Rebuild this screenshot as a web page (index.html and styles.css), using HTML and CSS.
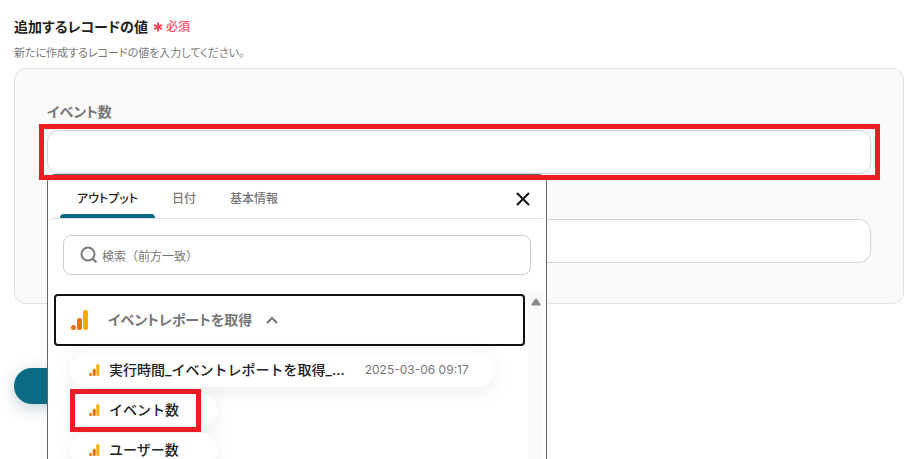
FILE: index.html
```html
<!DOCTYPE html>
<html lang="ja">
<head>
<meta charset="UTF-8" />
<meta name="viewport" content="width=device-width, initial-scale=1" />
<title>レコードの値を設定</title>
<link rel="stylesheet" href="styles.css">
</head>
<body>

<!-- アナリティクスのアイコン -->
<svg class="defs" width="0" height="0" aria-hidden="true">
  <symbol id="analytics" viewBox="0 0 18 20">
    <rect x="12" y="0" width="5" height="20" rx="2.5" fill="#f9ab00" />
    <rect x="6" y="8" width="5" height="12" rx="2.5" fill="#e37400" />
    <circle cx="2.5" cy="17.5" r="2.5" fill="#e37400" />
  </symbol>
</svg>

<main class="page">
  <h1 class="title">追加するレコードの値
    <span class="required">
      <svg width="10" height="10" viewBox="0 0 10 10" aria-hidden="true"><path d="M5 0.5v9M1 2.8l8 4.4M9 2.8l-8 4.4" /></svg>必須
    </span>
  </h1>
  <p class="description">新たに作成するレコードの値を入力してください。</p>

  <form class="panel" id="recordForm">
    <div class="field">
      <label for="eventCount">イベント数</label>
      <div class="field-box marked">
        <input type="text" id="eventCount" name="eventCount" />

        <!-- アウトプット選択 -->
        <div class="picker">
          <div class="picker-head">
            <div class="tabs" role="tablist">
              <button type="button" class="tab active" role="tab" aria-selected="true">アウトプット</button>
              <button type="button" class="tab" role="tab" aria-selected="false">日付</button>
              <button type="button" class="tab" role="tab" aria-selected="false">基本情報</button>
            </div>
            <button type="button" class="close" aria-label="閉じる">
              <svg width="14" height="14" viewBox="0 0 14 14"><path d="M1 1l12 12M13 1L1 13" /></svg>
            </button>
          </div>
          <div class="search">
            <svg width="18" height="18" viewBox="0 0 18 18" aria-hidden="true"><circle cx="8" cy="8" r="6.5" /><path d="M12.7 12.7l3.8 3.8" /></svg>
            <input type="text" aria-label="検索" placeholder="検索（前方一致）" />
          </div>
          <div class="picker-body">
            <div class="list">
              <button type="button" class="group" aria-expanded="true">
                <svg class="group-icon"><use href="#analytics" /></svg>
                イベントレポートを取得
                <svg class="chevron" width="12" height="8" viewBox="0 0 12 8"><path d="M1 7l5-5 5 5" /></svg>
              </button>
              <div class="items">
                <button type="button" class="item">
                  <svg class="item-icon"><use href="#analytics" /></svg>
                  <span class="item-name">実行時間_イベントレポートを取得_...</span>
                  <span class="item-value">2025-03-06 09:17</span>
                </button>
                <button type="button" class="item short picked">
                  <svg class="item-icon"><use href="#analytics" /></svg>
                  <span class="item-name">イベント数</span>
                </button>
                <button type="button" class="item short">
                  <svg class="item-icon"><use href="#analytics" /></svg>
                  <span class="item-name">ユーザー数</span>
                </button>
              </div>
            </div>
            <div class="scrollbar">
              <svg width="10" height="8" viewBox="0 0 10 8" aria-hidden="true"><path d="M5 1.5L8.7 6.5H1.3Z" /></svg>
            </div>
          </div>
        </div>
      </div>
    </div>
    <div class="field">
      <div class="field-box">
        <input type="text" name="userCount" aria-label="ユーザー数" />
      </div>
    </div>
  </form>

  <button type="submit" form="recordForm" class="save" aria-label="保存する"></button>
</main>

</body>
</html>
```
FILE: styles.css
```css
* {
  box-sizing: border-box;
}
body {
  margin: 0;
  font-family: Inter, "Noto Sans CJK JP", sans-serif;
  font-size: 14px;
  line-height: 20px;
  font-feature-settings: "palt";
  background: #fff;
  color: #222;
}
button,
input {
  font: inherit;
  font-feature-settings: inherit;
  color: inherit;
}
button {
  border: none;
  background: none;
  padding: 0;
  cursor: pointer;
}
svg {
  flex: none;
  fill: none;
}
.defs {
  position: absolute;
}
.page {
  position: relative;
  min-height: 100vh;
  overflow: hidden;
  padding: 16px 20px 20px 14px;
}
.title {
  display: flex;
  align-items: center;
  gap: 5px;
  margin: 0;
  font-size: 14px;
  font-weight: 700;
}
.required {
  display: flex;
  align-items: center;
  gap: 3px;
  padding-top: 1px;
  font-size: 12px;
  font-weight: 500;
  color: #ff4b5f;
}
.required svg {
  stroke: #ff4b5f;
  stroke-width: 2;
}
.description {
  margin: 6px 0 5px;
  font-size: 11px;
  color: #777;
}
/* PANEL */
.panel {
  display: flex;
  flex-direction: column;
  gap: 45px;
  padding: 32px 32px 40px;
  border: 1px solid #dfe1e6;
  border-radius: 12px;
  background: #fafafa;
}
.field label {
  display: block;
  margin-bottom: 8px;
  line-height: 21px;
  font-weight: 700;
  color: #777;
}
.field-box {
  position: relative;
}
.field-box > input {
  display: block;
  width: 100%;
  height: 44px;
  padding: 0 16px;
  border: 1px solid #cfd4db;
  border-radius: 12px;
  background: #fff;
}
.field-box > input:focus {
  outline: none;
  border-color: #0b6b83;
}
.marked::after {
  content: "";
  position: absolute;
  inset: -6px -9px -6px -8px;
  border: 5px solid #ee1c25;
  pointer-events: none;
  z-index: 3;
}
/* PICKER */
.picker {
  position: absolute;
  top: 100%;
  left: 0;
  z-index: 2;
  width: 500px;
  padding: 0 3px;
  border: 1px solid #666;
  border-radius: 8px;
  background: #fff;
}
.picker-head {
  display: flex;
  justify-content: space-between;
  padding: 0 9px;
  border-bottom: 1px solid #e0e0e0;
}
.tabs {
  display: flex;
}
.tab {
  position: relative;
  height: 43px;
  padding: 4px 17px 0;
  font-size: 12px;
  font-weight: 500;
  color: #777;
}
.tab.active {
  color: #222;
}
.tab.active::after {
  content: "";
  position: absolute;
  left: 0;
  right: 0;
  bottom: 0;
  height: 4px;
  border-radius: 4px 4px 0 0;
  background: #0b6b83;
}
.close {
  display: flex;
  align-items: center;
  padding: 6px 4px 2px;
}
.close svg {
  stroke: #111;
  stroke-width: 2;
}
.search {
  display: flex;
  align-items: center;
  gap: 4px;
  height: 40px;
  margin: 16px 12px;
  padding: 0 16px;
  border: 1px solid #ccc;
  border-radius: 8px;
}
.search svg {
  stroke: #777;
  stroke-width: 2;
}
.search input {
  flex: 1;
  padding: 4px 0 0;
  border: none;
  outline: none;
  background: none;
  font-size: 12px;
  font-feature-settings: normal;
}
.search input::placeholder {
  color: #777;
}
.picker-body {
  display: flex;
  gap: 3px;
  height: 320px;
  overflow: hidden;
}
.list {
  flex: 1;
  padding: 3px 0 0 3px;
}
.group {
  display: flex;
  align-items: center;
  width: 100%;
  height: 52px;
  padding: 0 15px;
  border: 2px solid #111;
  border-radius: 4px;
  font-weight: 700;
  color: #777;
}
.group-icon {
  width: 18px;
  height: 20px;
  margin-right: 19px;
}
.chevron {
  margin-left: 14px;
  stroke: #777;
  stroke-width: 2;
}
.items {
  display: flex;
  flex-direction: column;
  align-items: flex-start;
  gap: 6px;
  padding: 7px 16px;
}
.item {
  position: relative;
  display: flex;
  align-items: center;
  height: 34px;
  padding: 0 26px 0 19px;
  border-radius: 17px;
  background: #fff;
  box-shadow: 0 4px 20px rgba(0, 0, 0, 0.08);
  font-feature-settings: normal;
}
.item.short {
  padding-right: 38px;
}
.item-icon {
  width: 11px;
  height: 12px;
  margin-right: 9px;
}
.item-name {
  font-weight: 500;
}
.item-value {
  margin-left: 20px;
  font-size: 12px;
  color: #777;
}
.picked::after {
  content: "";
  position: absolute;
  inset: -4px 16px -5px 0;
  border: 5px solid #ee1c25;
  z-index: 1;
}
.scrollbar {
  display: flex;
  justify-content: center;
  width: 15px;
  padding-top: 7px;
  background: #fafafa;
}
.scrollbar svg {
  fill: #888;
  stroke: #888;
  stroke-width: 2;
  stroke-linejoin: round;
}
/* SAVE */
.save {
  display: block;
  width: 136px;
  height: 36px;
  margin-top: 64px;
  border-radius: 18px;
  background: #0b6b83;
  box-shadow: 0 4px 16px rgba(11, 60, 83, 0.25);
}
```
